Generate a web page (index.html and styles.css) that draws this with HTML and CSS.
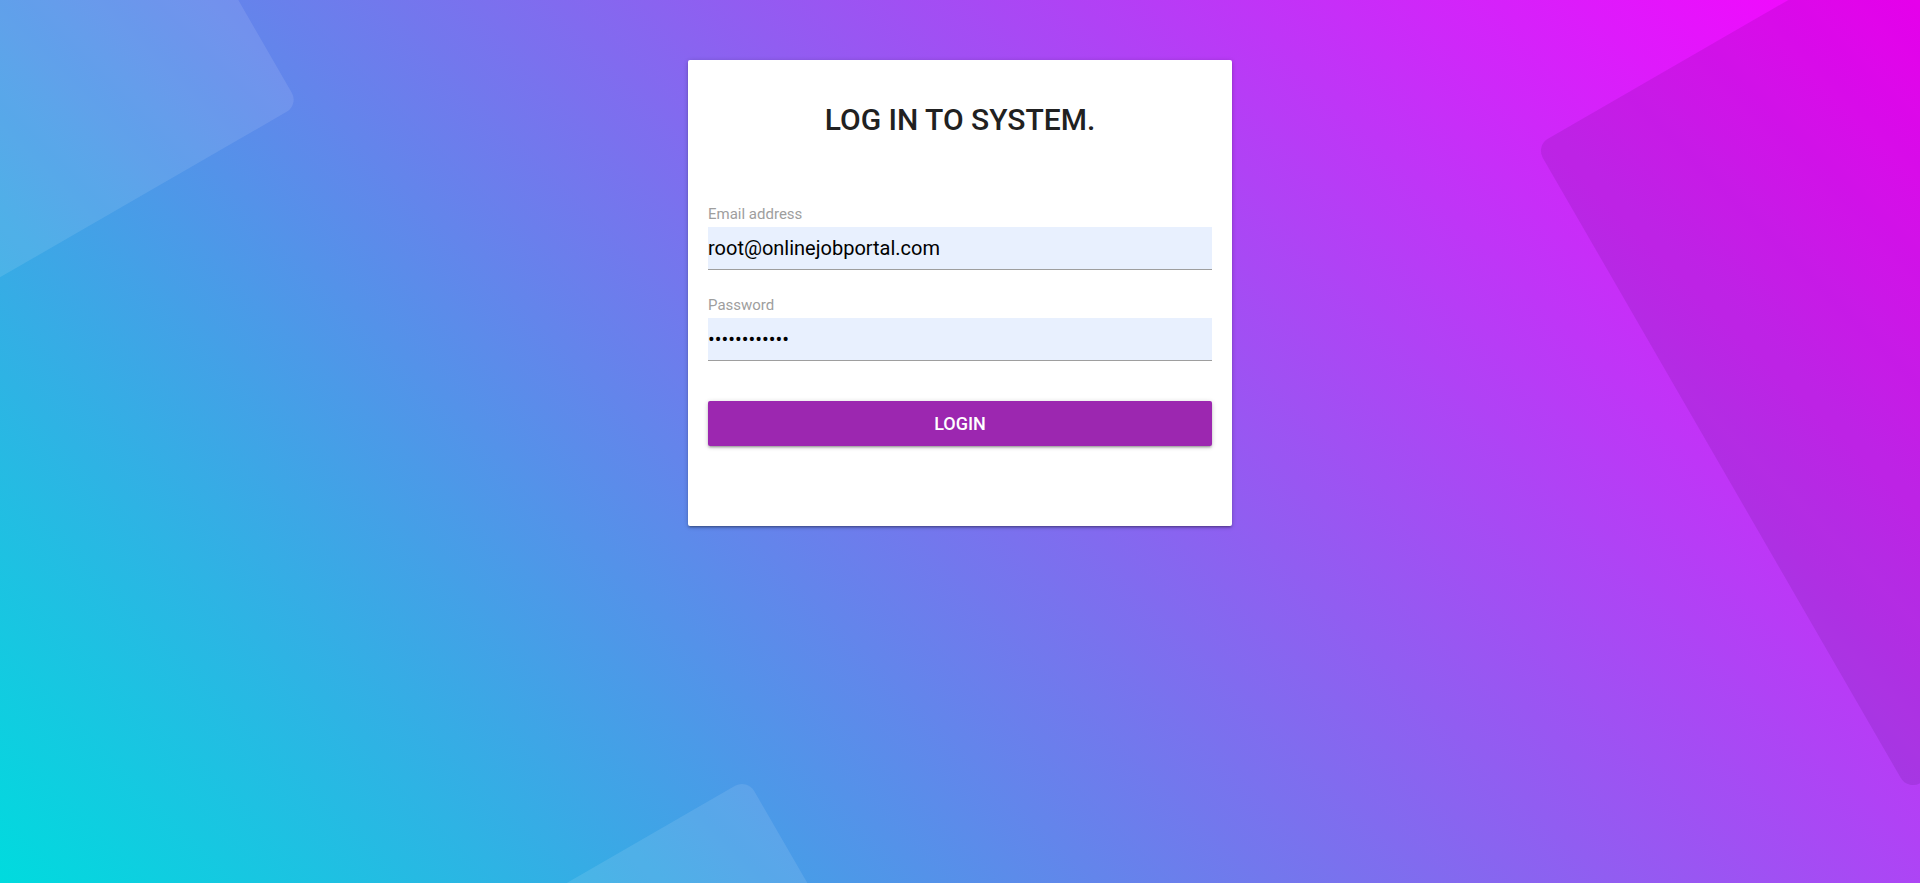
FILE: index.html
```html
<!DOCTYPE html>
<html lang="en">
<head>
<meta charset="utf-8">
<title>Log in to system</title>
<link rel="stylesheet" href="styles.css">
</head>
<body>
<div class="bg">
  <div class="shape shape-tl"></div>
  <div class="shape shape-bc"></div>
  <div class="shape shape-r"></div>
</div>
<main class="page">
  <form class="card" action="#" onsubmit="return false">
    <h1 class="card-title">LOG IN TO SYSTEM.</h1>
    <div class="field">
      <label class="field-label" for="email">Email address</label>
      <input class="field-input" id="email" type="email" value="root@onlinejobportal.com">
    </div>
    <div class="field field-second">
      <label class="field-label" for="password">Password</label>
      <input class="field-input" id="password" type="password" value="rootpassword">
    </div>
    <button class="btn" type="submit">LOGIN</button>
  </form>
</main>
</body>
</html>
```
FILE: styles.css
```css
html, body {
  margin: 0;
  padding: 0;
  height: 100%;
}
body {
  font-family: Roboto, "Liberation Sans", sans-serif;
  background: linear-gradient(45deg, #00dbde 0%, #fc00ff 100%);
  overflow: hidden;
  position: relative;
}
.bg {
  position: absolute;
  inset: 0;
  overflow: hidden;
  pointer-events: none;
}
.shape {
  position: absolute;
  transform: rotate(-30deg);
  border-radius: 14px;
}
.shape-tl {
  width: 600px;
  height: 600px;
  left: -411px;
  top: -305px;
  background: rgba(255, 255, 255, 0.1);
}
.shape-bc {
  width: 400px;
  height: 400px;
  left: 474px;
  top: 852px;
  background: rgba(255, 255, 255, 0.1);
}
.shape-r {
  width: 744px;
  height: 744px;
  left: 1672px;
  top: -90px;
  background: rgba(40, 0, 60, 0.1);
}
.page {
  position: relative;
  padding-top: 60px;
}
.card {
  box-sizing: border-box;
  width: 544px;
  margin: 0 auto;
  padding: 42px 20px 80px;
  background: #fff;
  border-radius: 2px;
  box-shadow: 0 2px 2px 0 rgba(0,0,0,0.14), 0 3px 1px -2px rgba(0,0,0,0.12), 0 1px 5px 0 rgba(0,0,0,0.2);
  display: flex;
  flex-direction: column;
}
.card-title {
  margin: 0 0 67px;
  font-size: 30px;
  line-height: 36px;
  font-weight: 500;
  color: #212121;
  text-align: center;
}
.field {
  display: flex;
  flex-direction: column;
}
.field-second {
  margin-top: 26px;
}
.field-label {
  font-size: 15px;
  line-height: 18px;
  color: #9e9e9e;
  margin-bottom: 4px;
}
.field-input {
  box-sizing: border-box;
  height: 43px;
  margin: 0;
  padding: 0;
  border: none;
  border-bottom: 1px solid #9e9e9e;
  border-radius: 0;
  background: #e8f0fe;
  font-family: Roboto, "Liberation Sans", sans-serif;
  font-size: 20px;
  color: #000;
  outline: none;
}
.btn {
  margin-top: 40px;
  height: 45px;
  border: none;
  border-radius: 2px;
  background: #9c27b0;
  color: #fff;
  font-family: Roboto, "Liberation Sans", sans-serif;
  font-size: 18px;
  font-weight: 500;
  letter-spacing: 0;
  box-shadow: 0 2px 2px 0 rgba(0,0,0,0.14), 0 3px 1px -2px rgba(0,0,0,0.12), 0 1px 5px 0 rgba(0,0,0,0.2);
  cursor: pointer;
}
```
